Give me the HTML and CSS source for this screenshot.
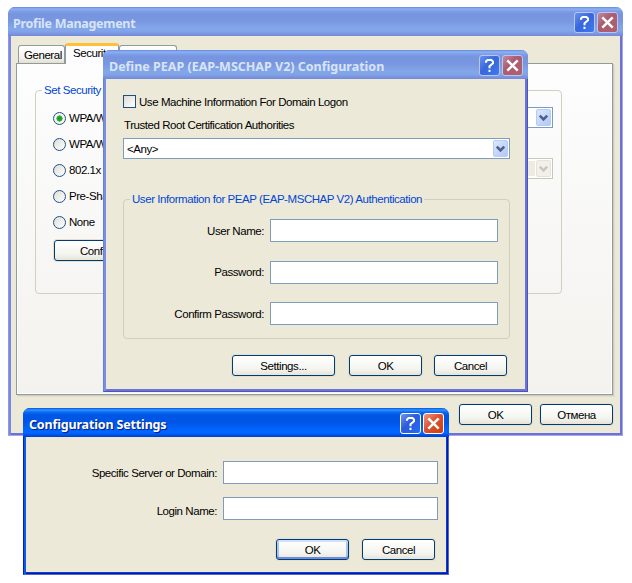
FILE: index.html
```html
<!DOCTYPE html>
<html lang="en">
<head>
<meta charset="utf-8">
<title>Profile Management</title>
<link rel="stylesheet" href="styles.css">
</head>
<body>
<svg class="defs" width="0" height="0">
  <symbol id="help" viewBox="0 0 21 21"><path d="M7 7.8V6.5L8.5 5H12.5L14 6.5V8.3L10.5 11.3V13.2M10.5 14.8V17" fill="none" stroke="#fff" stroke-width="2"/></symbol>
  <symbol id="close" viewBox="0 0 21 21"><path d="M5.3 5.3L15.7 15.7M15.7 5.3L5.3 15.7" fill="none" stroke="#fff" stroke-width="2.5"/></symbol>
  <symbol id="arrow" viewBox="0 0 15 17"><path d="M3.8 6.7L7.5 10.4L11.2 6.7" fill="none" stroke="currentColor" stroke-width="2.6"/></symbol>
</svg>

<section class="window profile">
  <header class="titlebar">
    <h1>Profile Management</h1>
    <span class="tool help"><svg><use href="#help"/></svg></span>
    <span class="tool close"><svg><use href="#close"/></svg></span>
  </header>
  <div class="profile-body">
    <nav class="tabs">
      <span class="tab"><span>General</span></span>
      <span class="tab active"><span>Security</span></span>
      <span class="tab blank"></span>
    </nav>
    <div class="page">
      <fieldset class="group security">
        <legend>Set Security</legend>
        <div class="columns">
          <div class="options">
            <label class="radio on"><i></i>WPA/WPA2</label>
            <label class="radio"><i></i>WPA/WPA2</label>
            <label class="radio"><i></i>802.1x</label>
            <label class="radio"><i></i>Pre-Shared</label>
            <label class="radio"><i></i>None</label>
            <button class="btn wide">Configure...</button>
          </div>
          <div class="types">
            <div class="combo"><span></span><b><svg><use href="#arrow"/></svg></b></div>
            <div class="combo disabled"><span></span><b><svg><use href="#arrow"/></svg></b></div>
          </div>
        </div>
      </fieldset>
    </div>
    <footer class="actions">
      <button class="btn">OK</button>
      <button class="btn">Отмена</button>
    </footer>
  </div>
</section>

<section class="window peap">
  <header class="titlebar">
    <h1>Define PEAP (EAP-MSCHAP V2) Configuration</h1>
    <span class="tool help"><svg><use href="#help"/></svg></span>
    <span class="tool close"><svg><use href="#close"/></svg></span>
  </header>
  <div class="peap-body">
    <label class="check"><i></i>Use Machine Information For Domain Logon</label>
    <div class="caption">Trusted Root Certification Authorities</div>
    <div class="combo"><span>&lt;Any&gt;</span><b><svg><use href="#arrow"/></svg></b></div>
    <fieldset class="group user">
      <legend>User Information for PEAP (EAP-MSCHAP V2) Authentication</legend>
      <div class="fields">
        <label>User Name:</label><input>
        <label>Password:</label><input>
        <label>Confirm Password:</label><input>
      </div>
    </fieldset>
    <footer class="actions">
      <button class="btn wide">Settings...</button>
      <button class="btn">OK</button>
      <button class="btn">Cancel</button>
    </footer>
  </div>
</section>

<section class="window config">
  <header class="titlebar">
    <h1>Configuration Settings</h1>
    <span class="tool help"><svg><use href="#help"/></svg></span>
    <span class="tool close"><svg><use href="#close"/></svg></span>
  </header>
  <div class="config-body">
    <div class="fields">
      <label>Specific Server or Domain:</label><input>
      <label class="login">Login Name:</label><input>
    </div>
    <footer class="actions">
      <button class="btn default">OK</button>
      <button class="btn">Cancel</button>
    </footer>
  </div>
</section>
</body>
</html>
```

FILE: styles.css
```css
* { box-sizing: border-box; }
body {
  margin: 0;
  width: 632px;
  height: 583px;
  overflow: hidden;
  position: relative;
  background: #fff;
  font: 11.5px/14px "Liberation Sans", sans-serif;
  letter-spacing: -0.44px;
  color: #000;
}
.defs { position: absolute; }
svg { display: block; }

/* windows */
.window {
  position: absolute;
  padding: 0 2px 2px;
  background: #ece9d8;
  border: 1px solid;
  border-top: 0;
  border-radius: 7px 7px 0 0;
}
.profile { left: 8px; top: 7px; width: 615px; height: 429px; border-color: #8f9ae6 #a3a6ea #a3a6ea #8f9ae6; box-shadow: inset 2px 0 #7389e0, inset -2px -2px #6a72d6; }
.peap { left: 103px; top: 50px; width: 425px; height: 342px; border-color: #6a7fdc #4f52b8 #4f52b8 #6a7fdc; box-shadow: inset 2px 0 #788ee2, inset -2px -2px #6974d6; }
.config { left: 23px; top: 408px; width: 426px; height: 167px; border-color: #0023b5 #5c66ba #5c66ba #0023b5; box-shadow: inset 2px 0 #0a5be8, inset -1px -1px #0018a0, inset -2px -2px #0040dc; }

.titlebar {
  height: 29px;
  margin: 0 -3px;
  padding: 5px 5px 0 6px;
  display: flex;
  gap: 2px;
  border-radius: 7px 7px 0 0;
  background: linear-gradient(#6487dd 0, #8fb1f3 2px, #7e9fe9 4px, #7794df 7px, #7997e0 14px, #82a6e9 21px, #82a5e8 24px, #7a95df 27px, #7387da 29px);
}
.profile .titlebar { padding-left: 5px; }
.config .titlebar { background: linear-gradient(#0055df 0, #3393ff 2px, #0b6cf5 4px, #0057e3 7px, #0055e5 14px, #0066ff 22px, #0066ff 25px, #0052e3 27px, #003dce 29px); }
.titlebar h1 {
  flex: 1;
  margin: 0;
  font: bold 12.5px/23px "Noto Sans", sans-serif;
  letter-spacing: 0;
  color: #d8e4f8;
  white-space: nowrap;
}
.profile h1 { letter-spacing: -0.28px; }
.config h1 { letter-spacing: -0.16px; color: #fff; text-shadow: 1px 1px 1px #0a1883; }
.tool {
  width: 21px;
  height: 21px;
  border: 1px solid #b8c6f3;
  border-radius: 3px;
  overflow: hidden;
}
.tool svg { width: 21px; height: 21px; margin: -1px; }
.tool.help { background: linear-gradient(135deg, #6b91ef, #3767dc 45%, #4179ee); }
.tool.close { background: linear-gradient(135deg, #c38a9b, #ac5c71 40%, #b16069); }
.config .tool { border-color: #fff; }
.config .help { background: linear-gradient(135deg, #7194f0, #2b5bdc 45%, #266bf3); }
.config .close { background: linear-gradient(135deg, #ee9a80, #dd5030 45%, #d43c0b); }

/* tabs */
.profile-body { padding: 7px 7px 0 5px; }
.tabs { display: flex; align-items: flex-end; height: 20px; padding-left: 2px; }
.tab {
  width: 47px;
  height: 18px;
  padding: 2px 0 0 5px;
  background: linear-gradient(#fff, #f3f3ee 70%, #e2dfd0);
  border: 1px solid #919b9c;
  border-bottom: 0;
  border-radius: 3px 3px 0 0;
}
.tab.active {
  width: 54px;
  height: 21px;
  margin-bottom: -1px;
  padding: 0 0 0 7px;
  line-height: 14px;
  background: #fcfcfe;
  border-top: 3px solid #ffc133;
}
.tab.blank { width: 58px; }
.page {
  height: 332px;
  padding: 19px 50px 0 18px;
  background: linear-gradient(#fdfdfe, #f3f2ee);
  border: 1px solid #919b9c;
  box-shadow: inset -1px -1px 0 #fff, inset 1px 0 0 #fff, 1px 1px 0 #d0cebf, 2px 2px 0 #e0ddcd;
}
.profile-body .actions { padding: 9px 0 0; justify-content: flex-end; gap: 8px; }

/* groups */
.group { margin: 0; padding: 0; border: 1px solid #d0d0bf; border-radius: 4px; min-width: 0; }
.group legend { color: #0046d5; padding: 0 2px; margin-left: 6px; white-space: nowrap; line-height: 14px; }
.security { height: 211px; }
.columns { display: flex; justify-content: space-between; }
.options { padding: 8px 0 0 17px; }
.radio { display: flex; align-items: center; gap: 3px; height: 26px; }
.radio i {
  width: 13px;
  height: 13px;
  flex: none;
  border: 1px solid #215285;
  border-radius: 50%;
  background: linear-gradient(135deg, #dcdcd7, #fff);
}
.radio.on i { background: radial-gradient(circle, #21a121 0 2px, #6cc76c 3px, #f4f4f2 3.3px); }
.options .btn { margin: 5px 0 0 1px; padding-left: 3px; }
.types { padding: 10px 8px 0 0; display: grid; gap: 30px; align-content: start; }
.types .combo { width: 120px; }

/* controls */
.btn {
  width: 73px;
  height: 21px;
  padding: 0;
  border: 1px solid #003c74;
  border-radius: 3px;
  background: linear-gradient(#fff, #f4f4ef 70%, #e6e3d8);
  box-shadow: 0 0 0 1px #e3e0d0;
  font: inherit;
  letter-spacing: inherit;
  color: #000;
  text-align: center;
}
.wide { width: 103px; display: block; }
.default { box-shadow: inset 0 2px 0 #cee0fb, inset 0 -2px 0 #6f8be0, inset 2px 0 0 #aac4f2, inset -2px 0 0 #aac4f2, 0 0 0 1px #e3e0d0; }
.combo {
  display: flex;
  justify-content: space-between;
  height: 21px;
  padding: 1px 1px 1px 3px;
  background: #fff;
  border: 1px solid #7f9db9;
  line-height: 18px;
}
.combo b {
  width: 15px;
  height: 17px;
  border: 1px solid #b7cbf8;
  border-radius: 2px;
  background: linear-gradient(135deg, #dae6fe, #b2c8f6);
  color: #4d6185;
}
.combo svg { width: 15px; height: 17px; margin: -1px; }
.combo.disabled { border-color: #c9c7ba; background: #fff; }
.combo.disabled span { flex: 1; margin: 1px; background: #eeebe0; }
.combo.disabled b { background: #f1f0ea; border-color: #e5e4da; color: #c9c8bc; }
input {
  width: 100%;
  height: 23px;
  margin: 0;
  padding: 0 3px;
  border: 1px solid #7f9db9;
  background: #fff;
  font: inherit;
}
.actions { display: flex; }
.fields { display: grid; align-items: center; column-gap: 6px; white-space: nowrap; }
.fields label { text-align: right; }

/* dialog: PEAP */
.peap-body { padding: 16px 15px 0 17px; }
.check { display: flex; align-items: center; height: 13px; gap: 3px; white-space: nowrap; }
.check i { width: 13px; height: 13px; flex: none; border: 1px solid #1c5180; background: linear-gradient(135deg, #dcdcd7, #fff); }
.caption { height: 14px; margin: 10px 0 6px 1px; white-space: nowrap; }
.user { height: 147px; margin-top: 33px; }
.user .fields { grid-template-columns: 140px 228px; grid-template-rows: 23px 23px 23px; row-gap: 18.5px; margin-top: 13px; }
.peap-body .actions { padding: 16px 3px 0 109px; gap: 12px; }
.peap-body .wide { margin-right: 2px; }

/* dialog: configuration */
.config-body { padding: 24px 8px 0; }
.config-body .fields { grid-template-columns: 183px 215px; row-gap: 13px; }
.config-body .login { padding-top: 4px; }
.config-body .actions { padding: 19px 3px 0; justify-content: flex-end; gap: 13px; }
```
